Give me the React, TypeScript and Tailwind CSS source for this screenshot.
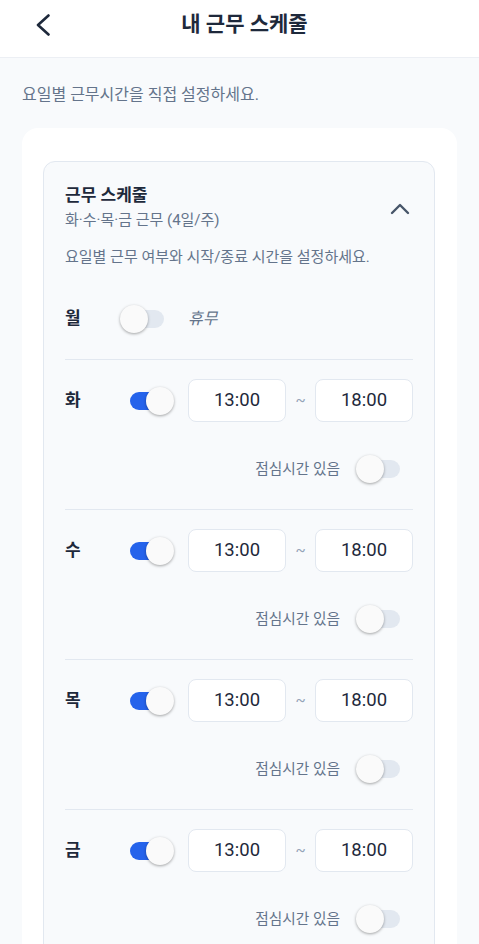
import type { FC } from 'react';
import { useState } from 'react';

// ===== 데이터 =====
type Dia = { label: string; on: boolean; start: string; end: string; lunch: boolean };

const DIAS_INICIALES: Dia[] = [
	{ label: '월', on: false, start: '13:00', end: '18:00', lunch: false },
	{ label: '화', on: true, start: '13:00', end: '18:00', lunch: false },
	{ label: '수', on: true, start: '13:00', end: '18:00', lunch: false },
	{ label: '목', on: true, start: '13:00', end: '18:00', lunch: false },
	{ label: '금', on: true, start: '13:00', end: '18:00', lunch: false },
];

const FONT = 'font-[Roboto,"Noto_Sans_CJK_KR",sans-serif]';

// ===== Switch =====
function Switch(props: { on: boolean; onClick?: () => void }) {
	return (
		<button
			type="button"
			onClick={props.onClick}
			className={`relative block w-[34px] h-[18px] rounded-full shrink-0 ${props.on ? 'bg-[#2563eb]' : 'bg-[#e2e8f0]'}`}>
			<span
				className={`absolute top-[-5px] w-[28px] h-[28px] rounded-full bg-[#fafafa] shadow-[0_1px_3px_rgba(0,0,0,0.35)] ${
					props.on ? 'left-[16px]' : 'left-[-10px]'
				}`}
			/>
		</button>
	);
}

const App: FC = () => {
	const [dias, setDias] = useState<Dia[]>(DIAS_INICIALES);

	const toggle = (i: number, key: 'on' | 'lunch') =>
		setDias((d) => d.map((x, j) => (j === i ? { ...x, [key]: !x[key] } : x)));

	return (
		<div className={`min-h-screen bg-[#f8fafc] ${FONT}`}>
			{/* Header */}
			<header className="h-[58px] bg-white border-b border-[#eceff4] grid grid-cols-[1fr_auto_1fr] items-center pb-[7px]">
				<div className="pl-[36px]">
					<svg width="14" height="22" viewBox="0 0 14 22" fill="none">
						<path d="M12.5 1.5 L2 11 L12.5 20.5" stroke="#1e293b" strokeWidth="2.6" strokeLinecap="round" strokeLinejoin="round" />
					</svg>
				</div>
				<h1 className="text-[21px] font-bold text-[#1e293b] pl-[10px]">내 근무 스케줄</h1>
				<div />
			</header>

			<main className="px-[22px] pt-[26px]">
				<p className="text-[16px] leading-[22px] text-[#64748b]">요일별 근무시간을 직접 설정하세요.</p>

				<section className="mt-[22px] bg-white rounded-[16px] pt-[33px] pl-[21px] pr-[22px] pb-[40px]">
					<div className="bg-[#f8fafc] border border-[#e2e8f0] rounded-[12px] px-[21px] pt-[21px]">
						{/* Cabecera */}
						<div className="flex items-center justify-between">
							<div>
								<h2 className="text-[17px] leading-[24px] font-bold text-[#1e293b]">근무 스케줄</h2>
								<p className="mt-[2px] text-[15px] leading-[22px] text-[#64748b]">화·수·목·금 근무 (4일/주)</p>
							</div>
							<svg width="20" height="12" viewBox="0 0 20 12" fill="none" className="mr-[3px] mt-[3px]">
								<path d="M2 10 L10 2 L18 10" stroke="#475569" strokeWidth="2.4" strokeLinecap="round" strokeLinejoin="round" />
							</svg>
						</div>
						<p className="mt-[16px] text-[15px] leading-[21px] text-[#64748b]">요일별 근무 여부와 시작/종료 시간을 설정하세요.</p>

						{/* Días */}
						<ul className="mt-[10px]">
							{dias.map((d, i) => (
								<li key={d.label} className={`pt-[19px] ${d.on ? 'pb-[26px]' : 'pb-[19px]'} ${i > 0 ? 'border-t border-[#e2e8f0]' : ''}`}>
									<div className="flex items-center h-[43px]">
										<span className="w-[65px] text-[17px] font-bold text-[#1e293b]">{d.label}</span>
										<Switch on={d.on} onClick={() => toggle(i, 'on')} />
										{d.on ? (
											<div className="ml-[24px] flex-1 flex items-center">
												<div className="w-[98px] h-[43px] bg-white border border-[#e2e8f0] rounded-[8px] flex items-center justify-center text-[18.5px] text-[#1e293b]">
													{d.start}
												</div>
												<span className="flex-1 text-center text-[15px] text-[#94a3b8]">~</span>
												<div className="w-[98px] h-[43px] bg-white border border-[#e2e8f0] rounded-[8px] flex items-center justify-center text-[18.5px] text-[#1e293b]">
													{d.end}
												</div>
											</div>
										) : (
											<span className="ml-[24px] text-[16px] italic text-[#64748b]">휴무</span>
										)}
									</div>
									{d.on && (
										<div className="mt-[33px] h-[28px] flex items-center justify-end pr-[13px]">
											<span className="text-[14.7px] text-[#64748b] mr-[26px]">점심시간 있음</span>
											<Switch on={d.lunch} onClick={() => toggle(i, 'lunch')} />
										</div>
									)}
								</li>
							))}
						</ul>
					</div>
				</section>
			</main>
		</div>
	);
};

export default App;
